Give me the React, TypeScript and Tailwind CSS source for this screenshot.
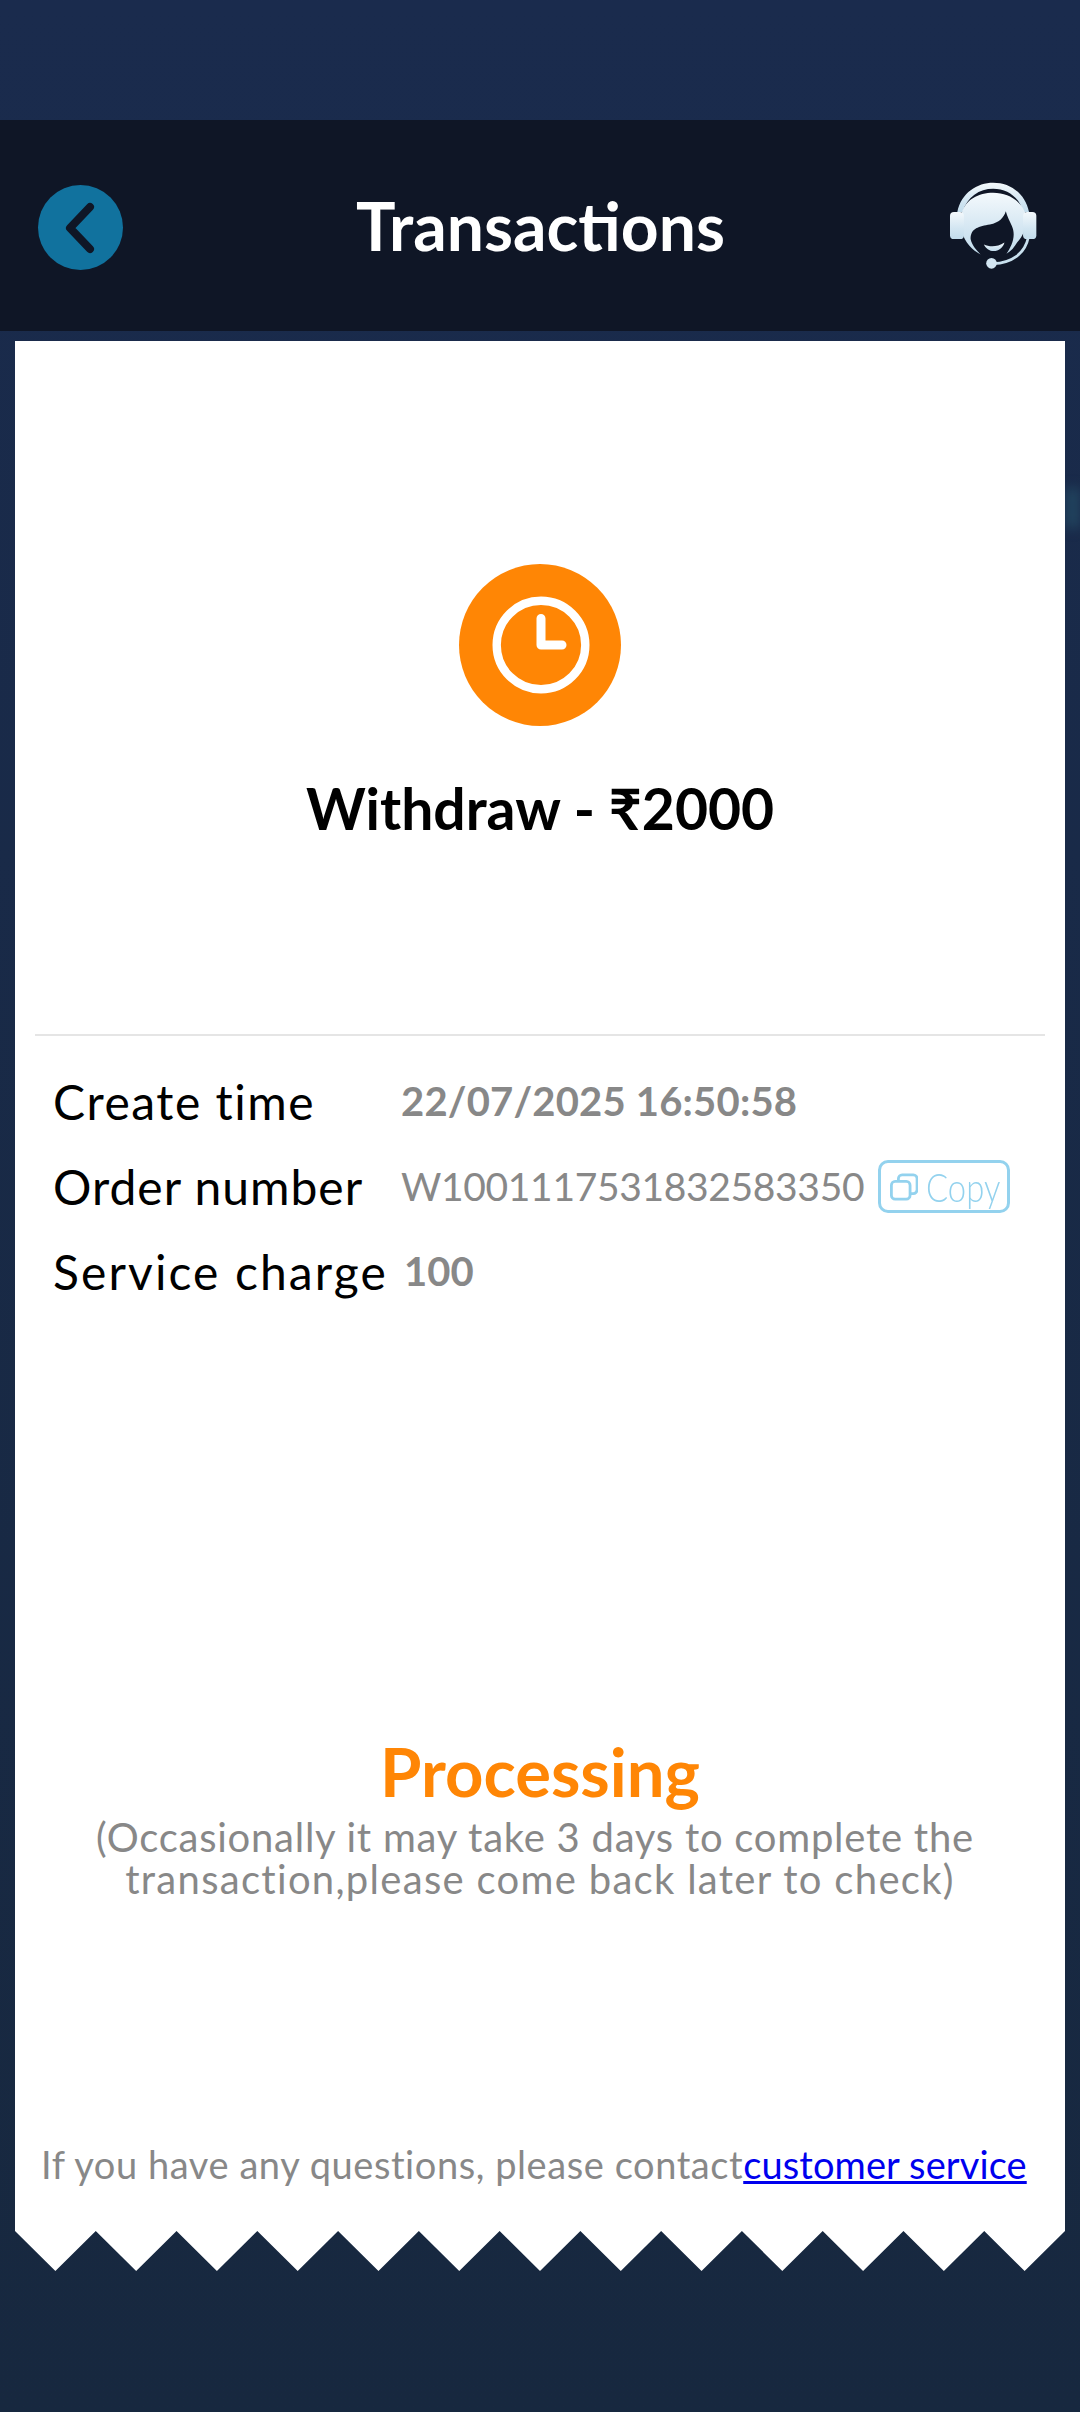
const font = { fontFamily: 'Lato, "Noto Sans", sans-serif' };

function HeadsetIcon() {
  return (
    <svg width="87" height="87" viewBox="210 90 262 262">
      <defs>
        <linearGradient id="hs" x1="0" y1="0" x2="0" y2="1">
          <stop offset="0" stopColor="#f4f9fc" />
          <stop offset="0.6" stopColor="#d3e6f2" />
          <stop offset="1" stopColor="#c2dcec" />
        </linearGradient>
      </defs>
      <path
        fill="url(#hs)"
        d="M232 180 C244 122 292 92 340 92 C392 92 436 124 448 180 L430 180 C418 134 382 110 340 110 C298 110 262 134 248 180 Z"
      />
      <path
        fill="url(#hs)"
        d="M246 182 C256 144 296 122 340 122 C386 122 422 146 436 182 C444 214 436 246 412 272 C404 286 394 298 380 306 C396 282 410 252 396 222 C390 208 382 194 378 178 C372 198 358 212 330 218 C298 224 272 228 272 262 C276 280 288 294 302 308 C276 296 254 270 246 240 Z"
      />
      <path fill="url(#hs)" d="M312 278 C330 286 352 286 374 272 C370 288 356 298 342 298 C328 298 318 290 312 278 Z" />
      <rect x="210" y="180" width="42" height="82" rx="12" fill="url(#hs)" />
      <rect x="430" y="180" width="40" height="82" rx="12" fill="url(#hs)" />
      <path d="M446 256 C436 306 396 334 340 336" fill="none" stroke="#c8e0ee" strokeWidth="8" />
      <circle cx="335" cy="335" r="16" fill="#d3e6f2" />
    </svg>
  );
}

function ClockBadge() {
  return (
    <div className="w-[162px] h-[162px] rounded-full bg-[#ff8605] flex items-center justify-center">
      <svg width="100" height="98" viewBox="0 0 100 98" fill="none" stroke="#ffffff" strokeLinecap="round" strokeLinejoin="round">
        <circle cx="51" cy="49" r="44.3" strokeWidth="8.4" />
        <path d="M51 22.5 V49 H72" strokeWidth="9" />
      </svg>
    </div>
  );
}

function CopyIcon() {
  return (
    <svg width="28" height="28" viewBox="0 0 30 30" fill="none" stroke="#93d2ee" strokeWidth="3">
      <rect x="1.5" y="9" width="20" height="19" rx="4" />
      <path d="M9 9 V6 a4 4 0 0 1 4-4 h12 a4 4 0 0 1 4 4 v12 a4 4 0 0 1-4 4 h-3" />
    </svg>
  );
}

function Teeth() {
  const n = 13;
  const step = 1050 / n;
  let pts = '0,0 1050,0';
  for (let i = n; i > 0; i--) {
    pts += ` ${(i - 0.5) * step},40 ${(i - 1) * step},0`;
  }
  return (
    <svg className="block w-full h-[40px]" viewBox="0 0 1050 40" preserveAspectRatio="none">
      <polygon points={pts} fill="#ffffff" />
    </svg>
  );
}

export default function App() {
  return (
    <div
      className="relative w-[1080px] h-[2412px] flex flex-col bg-gradient-to-b from-[#1a2b4d] to-[#17283f] overflow-hidden"
      style={font}
    >
      <div className="absolute right-0 top-[488px] w-[15px] h-[40px] bg-[#21445f] blur-[6px]" />

      <div className="h-[120px]" />

      <div className="relative h-[211px] bg-[#0f1626] flex items-center justify-between pl-[38px] pr-[43px]">
        <div className="mt-[3px] w-[85px] h-[85px] rounded-full bg-[#11729e]">
          <svg width="85" height="85" viewBox="0 0 85 85" fill="none" stroke="#0f1626" strokeWidth="8" strokeLinecap="round" strokeLinejoin="round">
            <path d="M52 22 L32 43 L52 64" />
          </svg>
        </div>
        <h1 className="ml-[8px] text-[66px] leading-none font-bold text-white">Transactions</h1>
        <HeadsetIcon />
      </div>

      <div className="relative mt-[10px] mx-[15px]">
        <div className="h-[1890px] bg-white flex flex-col">
          <div className="pt-[223px] flex flex-col items-center">
            <ClockBadge />
            <p className="mt-[50px] text-[57px] leading-[64px] font-bold text-black">Withdraw - ₹2000</p>
          </div>

          <div className="mt-[194px] mx-[20px] h-[2px] bg-[#e5e5e5]" />

          <div className="mt-[23px] pl-[38px] flex flex-col text-[48px] leading-[85px] text-black">
            <div className="flex items-center h-[85px]">
              <span className="w-[348px] tracking-[1.5px]">Create time</span>
              <span className="text-[40px] tracking-[0.2px] font-bold text-[#888888]">22/07/2025 16:50:58</span>
            </div>
            <div className="flex items-center h-[85px]">
              <span className="w-[348px] tracking-[1px]">Order number</span>
              <span className="text-[39px] tracking-[-0.35px] text-[#888888]">W1001117531832583350</span>
              <span className="ml-[14px] w-[132px] h-[53px] border-[3px] border-[#93d2ee] rounded-[10px] flex items-center pl-[9px] gap-[8px]">
                <CopyIcon />
                <span className="text-[40px] leading-none font-light text-[#93d2ee] inline-block scale-x-[0.82] origin-left w-[72px]">Copy</span>
              </span>
            </div>
            <div className="flex items-center h-[85px]">
              <span className="w-[351px] tracking-[2.1px]">Service charge</span>
              <span className="text-[40px] font-bold text-[#888888]">100</span>
            </div>
          </div>

          <div className="mt-[421px] flex flex-col items-center text-center">
            <p className="text-[67px] leading-[72px] font-bold text-[#ff8605]">Processing</p>
            <div className="mt-[9px] text-[40px] leading-[42px] text-[#888888]">
              <p className="pr-[10px] tracking-[0.75px]">(Occasionally it may take 3 days to complete the</p>
              <p className="tracking-[1.3px]">transaction,please come back later to check)</p>
            </div>
          </div>

          <p className="mt-auto mb-[42px] pl-[26px] text-[38px] leading-[50px] tracking-[0.57px] text-[#888888]">
            If you have any questions, please contact
            <a className="text-[#0000ee] underline tracking-[0.1px]">customer service</a>
          </p>
        </div>
        <Teeth />
      </div>
    </div>
  );
}
